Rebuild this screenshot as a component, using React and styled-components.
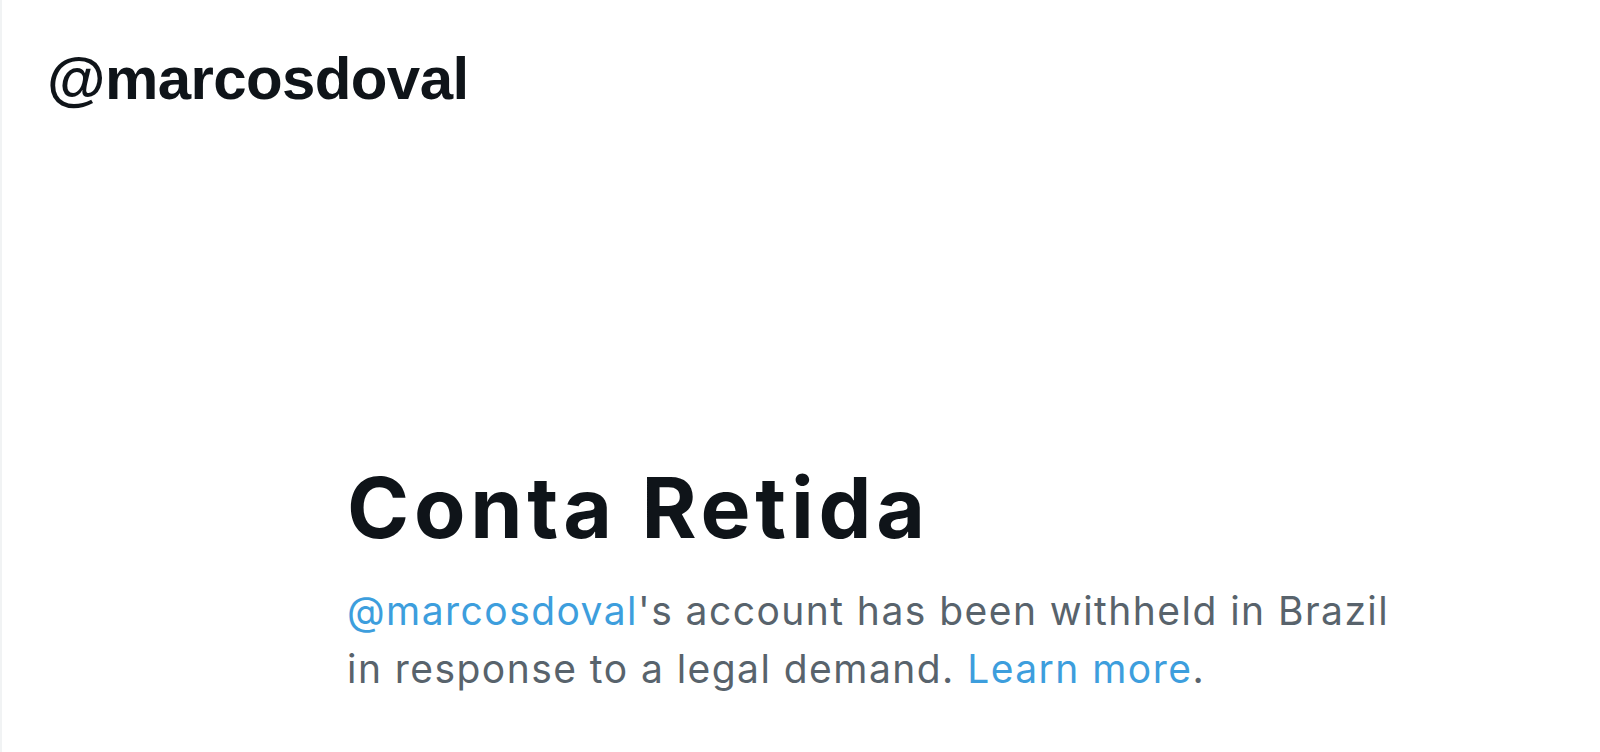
import React from "react";
import styled, { createGlobalStyle } from "styled-components";

const GlobalStyle = createGlobalStyle`
  html, body {
    margin: 0;
    padding: 0;
    background: #fff;
  }
  body {
    width: 1600px;
    height: 752px;
    overflow: hidden;
  }
`;

const Page = styled.div`
  height: 752px;
  box-sizing: border-box;
  border-left: 2px solid #f1f3f4;
  display: flex;
  flex-direction: column;
`;

const Header = styled.h1`
  margin: 0;
  padding: 49px 0 0 45px;
  font-family: "Liberation Sans", Arial, sans-serif;
  font-weight: 700;
  font-size: 60px;
  line-height: 60px;
  letter-spacing: -0.6px;
  color: #0f1419;
`;

const Notice = styled.section`
  margin: 357px 0 0 345px;
  display: flex;
  flex-direction: column;
  gap: 32px;
`;

const Title = styled.h2`
  margin: 0;
  font-family: Inter, "Noto Sans", sans-serif;
  font-weight: 700;
  font-size: 84px;
  line-height: 84px;
  letter-spacing: 4.8px;
  color: #0f1419;
`;

const Message = styled.p`
  margin: 0;
  width: 1070px;
  font-family: Inter, "Noto Sans", sans-serif;
  font-weight: 400;
  font-size: 39px;
  line-height: 58px;
  letter-spacing: 1.45px;
  color: #58636c;
`;

const Link = styled.a`
  color: #3d9edd;
  text-decoration: none;
`;

export default function App() {
  return (
    <>
      <GlobalStyle />
      <Page>
        <Header>@marcosdoval</Header>
        <Notice>
          <Title>Conta Retida</Title>
          <Message>
            <Link href="#">@marcosdoval</Link>'s account has been withheld in Brazil
            in response to a legal demand. <Link href="#">Learn more</Link>.
          </Message>
        </Notice>
      </Page>
    </>
  );
}
